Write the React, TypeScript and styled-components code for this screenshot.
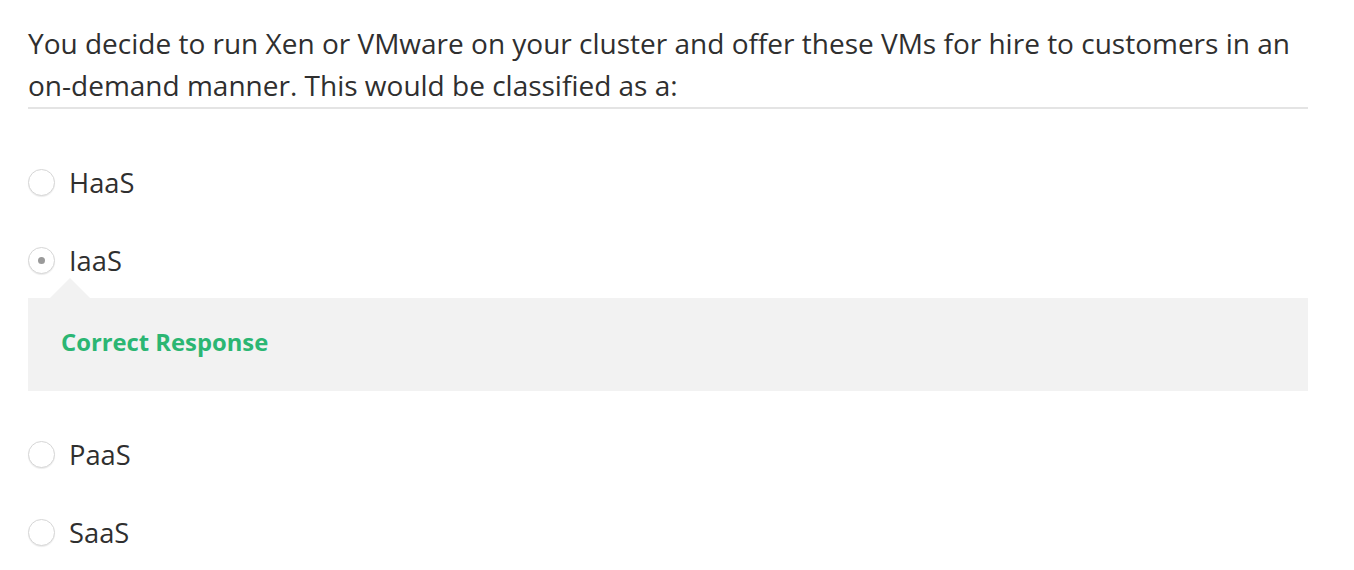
import React from "react";
import styled, { createGlobalStyle } from "styled-components";

const GlobalStyle = createGlobalStyle`
  body {
    margin: 0;
    background: #ffffff;
    font-family: "Open Sans", "Liberation Sans", sans-serif;
    color: #2f2f2f;
  }
`;

const Page = styled.div`
  padding: 0 28px;
  width: 1280px;
`;

const Question = styled.div`
  padding-top: 22px;
  padding-bottom: 1px;
  font-size: 28px;
  line-height: 42px;
  border-bottom: 2px solid #e4e4e4;
`;

const OptionRow = styled.label<{ gap: number }>`
  display: flex;
  align-items: center;
  height: 40px;
  margin-top: ${(p) => p.gap}px;
  font-size: 27.3px;
  cursor: pointer;
`;

const Radio = styled.span<{ checked?: boolean }>`
  box-sizing: border-box;
  width: 27px;
  height: 27px;
  border-radius: 50%;
  border: 1px solid #d6d6d6;
  box-shadow: 0 1px 1px rgba(0, 0, 0, 0.08);
  background: #fff;
  margin-right: 14px;
  display: flex;
  align-items: center;
  justify-content: center;
  &::after {
    content: "";
    display: ${(p) => (p.checked ? "block" : "none")};
    width: 7px;
    height: 7px;
    border-radius: 50%;
    background: #9a9a9a;
  }
`;

const Feedback = styled.div`
  position: relative;
  margin-top: 18px;
  height: 93px;
  box-sizing: border-box;
  padding: 0 33px 6px;
  background: #f2f2f2;
  display: flex;
  align-items: center;
  &::before {
    content: "";
    position: absolute;
    top: -20px;
    left: 22px;
    border-left: 20px solid transparent;
    border-right: 20px solid transparent;
    border-bottom: 20px solid #f2f2f2;
  }
`;

const Verdict = styled.span`
  color: #2bb673;
  font-weight: 700;
  font-size: 23.8px;
`;

const options = [
  { label: "HaaS", gap: 53 },
  { label: "IaaS", gap: 38, checked: true },
  { label: "PaaS", gap: 43 },
  { label: "SaaS", gap: 38 },
];

function App() {
  return (
    <Page>
      <GlobalStyle />
      <Question>
        You decide to run Xen or VMware on your cluster and offer these VMs for
        hire to customers in an on-demand manner. This would be classified as
        a:
      </Question>
      {options.map((o) => (
        <React.Fragment key={o.label}>
          <OptionRow gap={o.gap}>
            <Radio checked={o.checked} />
            {o.label}
          </OptionRow>
          {o.checked && (
            <Feedback>
              <Verdict>Correct Response</Verdict>
            </Feedback>
          )}
        </React.Fragment>
      ))}
    </Page>
  );
}

export default App;
